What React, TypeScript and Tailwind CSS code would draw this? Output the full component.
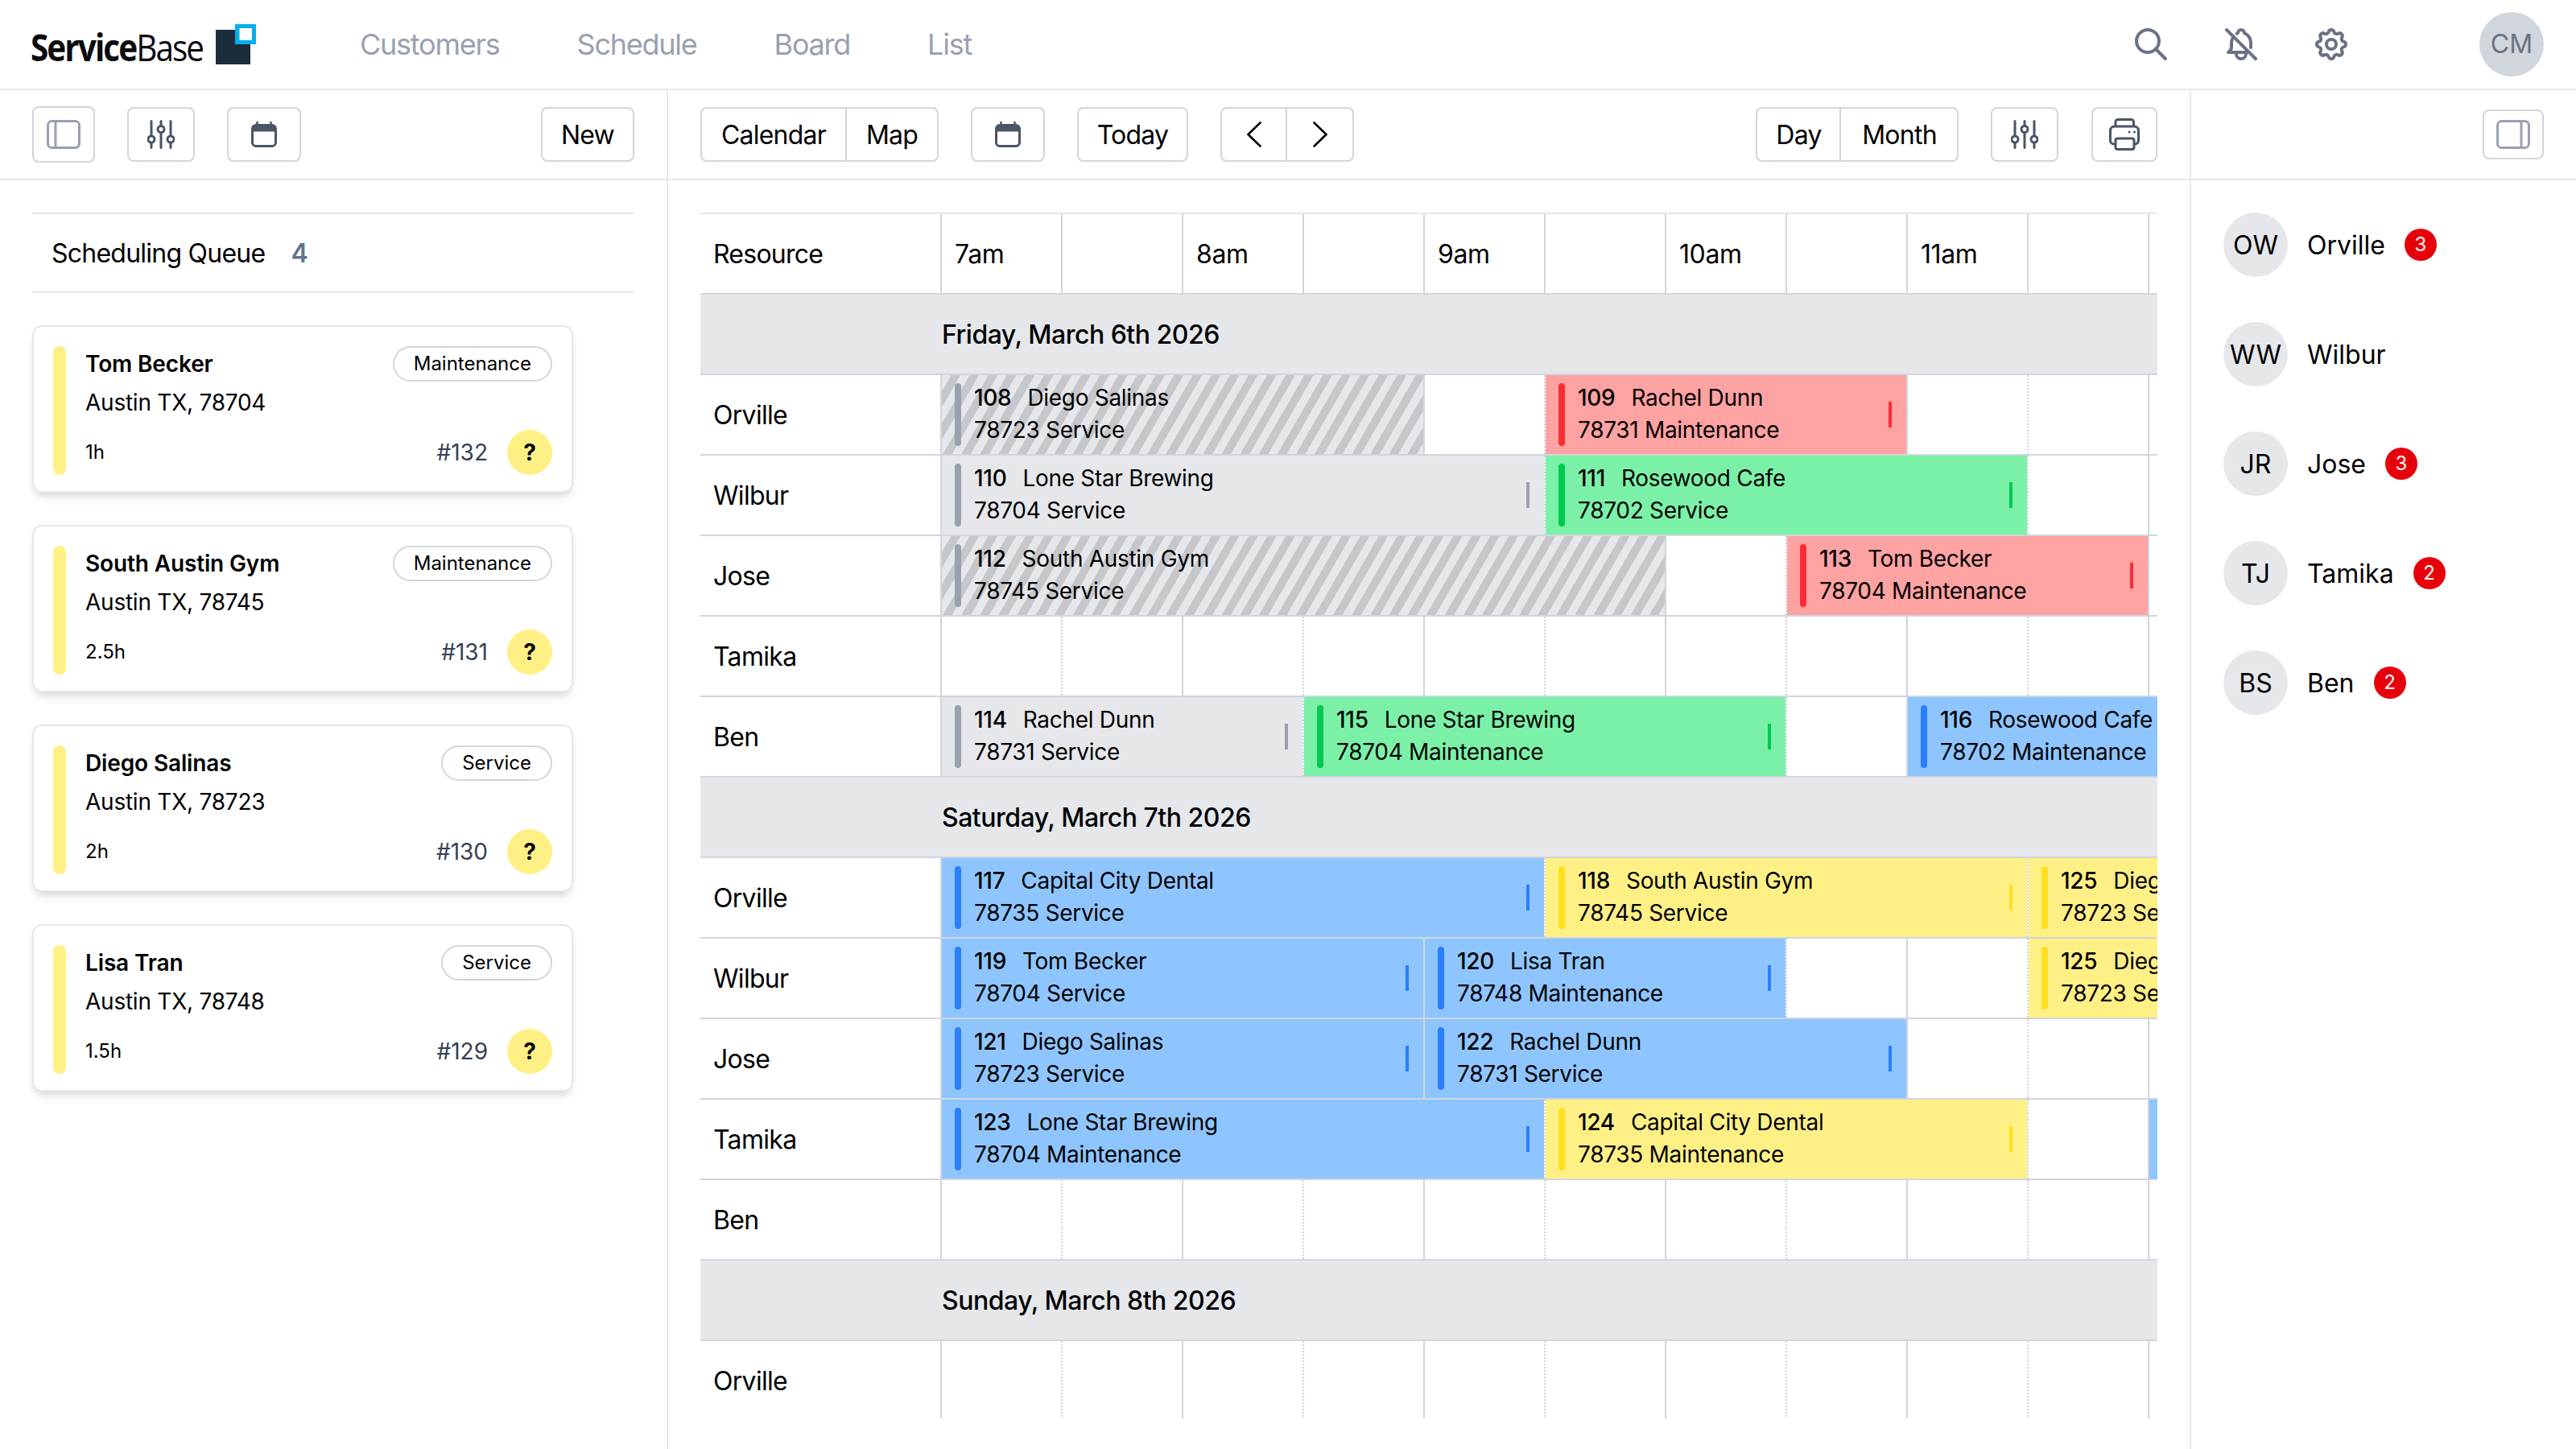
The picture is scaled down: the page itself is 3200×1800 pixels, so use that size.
import React from "react";
import { TbSearch, TbBellOff, TbSettings } from "react-icons/tb";

type Color = "gray" | "stripe" | "red" | "green" | "blue" | "yellow";
type Ev = { id: string; name: string; line2: string; color: Color; start: number; span: number };
type Row = { resource: string; events: Ev[] };

const COLORS: Record<Color, { bg: string; bar: string }> = {
  gray: { bg: "bg-gray-200", bar: "bg-gray-400" },
  stripe: {
    bg: "bg-[repeating-linear-gradient(120deg,#e5e7eb,#e5e7eb_5px,#c5c7cb_5px,#c5c7cb_10px)]",
    bar: "bg-gray-400",
  },
  red: { bg: "bg-red-300", bar: "bg-red-500" },
  green: { bg: "bg-green-300", bar: "bg-green-500" },
  blue: { bg: "bg-blue-300", bar: "bg-blue-500" },
  yellow: { bg: "bg-yellow-200", bar: "bg-yellow-300" },
};

const friday: Row[] = [
  {
    resource: "Orville",
    events: [
      { id: "108", name: "Diego Salinas", line2: "78723 Service", color: "stripe", start: 0, span: 4 },
      { id: "109", name: "Rachel Dunn", line2: "78731 Maintenance", color: "red", start: 5, span: 3 },
    ],
  },
  {
    resource: "Wilbur",
    events: [
      { id: "110", name: "Lone Star Brewing", line2: "78704 Service", color: "gray", start: 0, span: 5 },
      { id: "111", name: "Rosewood Cafe", line2: "78702 Service", color: "green", start: 5, span: 4 },
    ],
  },
  {
    resource: "Jose",
    events: [
      { id: "112", name: "South Austin Gym", line2: "78745 Service", color: "stripe", start: 0, span: 6 },
      { id: "113", name: "Tom Becker", line2: "78704 Maintenance", color: "red", start: 7, span: 3 },
    ],
  },
  { resource: "Tamika", events: [] },
  {
    resource: "Ben",
    events: [
      { id: "114", name: "Rachel Dunn", line2: "78731 Service", color: "gray", start: 0, span: 3 },
      { id: "115", name: "Lone Star Brewing", line2: "78704 Maintenance", color: "green", start: 3, span: 4 },
      { id: "116", name: "Rosewood Cafe", line2: "78702 Maintenance", color: "blue", start: 8, span: 3 },
    ],
  },
];

const saturday: Row[] = [
  {
    resource: "Orville",
    events: [
      { id: "117", name: "Capital City Dental", line2: "78735 Service", color: "blue", start: 0, span: 5 },
      { id: "118", name: "South Austin Gym", line2: "78745 Service", color: "yellow", start: 5, span: 4 },
      { id: "125", name: "Diego Salinas", line2: "78723 Service", color: "yellow", start: 9, span: 3 },
    ],
  },
  {
    resource: "Wilbur",
    events: [
      { id: "119", name: "Tom Becker", line2: "78704 Service", color: "blue", start: 0, span: 4 },
      { id: "120", name: "Lisa Tran", line2: "78748 Maintenance", color: "blue", start: 4, span: 3 },
      { id: "125", name: "Diego Salinas", line2: "78723 Service", color: "yellow", start: 9, span: 3 },
    ],
  },
  {
    resource: "Jose",
    events: [
      { id: "121", name: "Diego Salinas", line2: "78723 Service", color: "blue", start: 0, span: 4 },
      { id: "122", name: "Rachel Dunn", line2: "78731 Service", color: "blue", start: 4, span: 4 },
    ],
  },
  {
    resource: "Tamika",
    events: [
      { id: "123", name: "Lone Star Brewing", line2: "78704 Maintenance", color: "blue", start: 0, span: 5 },
      { id: "124", name: "Capital City Dental", line2: "78735 Maintenance", color: "yellow", start: 5, span: 4 },
      { id: "", name: "", line2: "", color: "blue", start: 10, span: 2 },
    ],
  },
  { resource: "Ben", events: [] },
];

const HALF_HOURS = Array.from({ length: 12 }, (_, i) => i);
const HOUR_LABELS: Record<number, string> = { 0: "7am", 2: "8am", 4: "9am", 6: "10am", 8: "11am", 10: "12pm" };

const queue = [
  { name: "Tom Becker", city: "Austin TX, 78704", tag: "Maintenance", dur: "1h", num: "#132" },
  { name: "South Austin Gym", city: "Austin TX, 78745", tag: "Maintenance", dur: "2.5h", num: "#131" },
  { name: "Diego Salinas", city: "Austin TX, 78723", tag: "Service", dur: "2h", num: "#130" },
  { name: "Lisa Tran", city: "Austin TX, 78748", tag: "Service", dur: "1.5h", num: "#129" },
];

const people = [
  { init: "OW", name: "Orville", count: 3 },
  { init: "WW", name: "Wilbur", count: 0 },
  { init: "JR", name: "Jose", count: 3 },
  { init: "TJ", name: "Tamika", count: 2 },
  { init: "BS", name: "Ben", count: 2 },
];

function SlidersIcon() {
  return (
    <svg viewBox="0 0 34 36" className="w-[17px] h-[18px] text-gray-600" fill="none" stroke="currentColor" strokeWidth="3" strokeLinecap="round">
      <path d="M5 1.5v33M17 1.5v33M29 1.5v33" />
      <circle cx="5" cy="24" r="4" fill="#fff" />
      <circle cx="17" cy="11.5" r="4" fill="#fff" />
      <circle cx="29" cy="24" r="4" fill="#fff" />
    </svg>
  );
}

function CalendarIcon() {
  return (
    <svg viewBox="0 0 32 32" className="w-4 h-4 text-gray-600" fill="none" stroke="currentColor" strokeWidth="3">
      <rect x="1.5" y="4.5" width="29" height="26" rx="4.5" />
      <path d="M1.5 12V9a4.5 4.5 0 0 1 4.5-4.5h20a4.5 4.5 0 0 1 4.5 4.5v3z" fill="currentColor" strokeWidth="1" />
      <path d="M7.5 0.5v5M24.5 0.5v5" strokeWidth="2.5" strokeLinecap="round" />
    </svg>
  );
}

function PrinterIcon() {
  return (
    <svg viewBox="0 0 38 40" className="w-[19px] h-5 text-gray-600" fill="none" stroke="currentColor" strokeWidth="3" strokeLinejoin="round">
      <path d="M8 10V4.5a3 3 0 0 1 3-3h16.5a3 3 0 0 1 3 3V10" />
      <path d="M8 32H6a4.5 4.5 0 0 1-4.5-4.5V15A5 5 0 0 1 6.5 10h25a5 5 0 0 1 5 5v12.5a4.5 4.5 0 0 1-4.5 4.5h-1.5" />
      <rect x="8" y="25" width="23" height="13.5" rx="2.5" fill="#fff" />
      <circle cx="25" cy="17" r="1.5" fill="currentColor" stroke="none" />
      <circle cx="31.5" cy="17" r="1.5" fill="currentColor" stroke="none" />
    </svg>
  );
}

function PanelIcon({ side }: { side: "left" | "right" }) {
  const x = side === "left" ? 11 : 31;
  return (
    <svg viewBox="0 0 42 36" className="w-[21px] h-[18px] text-gray-400" fill="none" stroke="currentColor" strokeWidth="3">
      <rect x="1.5" y="1.5" width="39" height="33" rx="5" />
      <path d={`M${x} 1.5v33`} />
    </svg>
  );
}

function Chevron({ dir }: { dir: "left" | "right" }) {
  return (
    <svg viewBox="0 0 18 32" className="w-[9px] h-4 text-black" fill="none" stroke="currentColor" strokeWidth="2.6" strokeLinecap="round" strokeLinejoin="round">
      <path d={dir === "left" ? "M16.5 1.5L1.5 16l15 14.5" : "M1.5 1.5L16.5 16l-15 14.5"} />
    </svg>
  );
}

function Logo() {
  return (
    <div className="flex items-center">
      <div className="w-[114px] whitespace-nowrap font-['Open_Sans',sans-serif] text-[23px] leading-none tracking-[-1.1px] text-[#0b0b0f] mt-[3px] -ml-px origin-left scale-x-[0.88]">
        <span className="font-bold">Service</span>
        <span>Base</span>
      </div>
      <svg viewBox="0 0 50 50" className="w-[25px] h-[25px] ml-px">
        <rect x="0" y="7" width="43" height="43" fill="#1b2d3d" />
        <rect x="24" y="0" width="26" height="25" fill="#00b0f0" />
        <rect x="29.5" y="5" width="15.5" height="15" fill="#fff" />
      </svg>
    </div>
  );
}

function EventBlock({ ev }: { ev: Ev }) {
  const c = COLORS[ev.color];
  return (
    <div
      className={`${c.bg} ml-px row-start-1 flex items-center pl-2 pr-[9px] min-w-0 overflow-hidden`}
      style={{ gridColumn: `${ev.start + 2} / span ${ev.span}` }}
    >
      <div className={`${c.bar} w-1 h-[39px] rounded-full shrink-0`} />
      <div className="ml-2 -mt-px text-sm leading-5 tracking-[-0.15px] whitespace-nowrap text-black">
        <div>
          <span className="font-medium">{ev.id}</span>
          <span className="ml-2.5">{ev.name}</span>
        </div>
        <div>{ev.line2}</div>
      </div>
      {ev.color !== "stripe" && <div className={`${c.bar} w-0.5 h-4 ml-auto shrink-0`} />}
    </div>
  );
}

function ResourceRow({ row }: { row: Row }) {
  return (
    <div className="grid grid-cols-[149px_repeat(12,75px)] grid-rows-[49px] w-[1049px] border-b border-gray-300">
      <div className="col-start-1 row-start-1 flex items-center pl-2 pt-px text-base tracking-[-0.35px]">{row.resource}</div>
      {HALF_HOURS.map((i) => (
        <div
          key={i}
          className={`row-start-1 border-l border-gray-300 ${i % 2 === 0 ? "border-solid" : "border-dotted"}`}
          style={{ gridColumn: `${i + 2}` }}
        />
      ))}
      {row.events.map((ev) => (
        <EventBlock key={`${ev.id}-${ev.start}`} ev={ev} />
      ))}
    </div>
  );
}

function DayBand({ label }: { label: string }) {
  return (
    <div className="h-[50px] bg-gray-200 border-b border-gray-300 flex items-center pl-[150px] pt-px text-base font-medium tracking-[-0.25px]">
      {label}
    </div>
  );
}

function HeaderRow() {
  return (
    <div className="grid grid-cols-[149px_repeat(12,75px)] grid-rows-[49px] w-[1049px] border-b border-gray-300">
      <div className="flex items-center pl-2 pt-px text-base tracking-[-0.38px]">Resource</div>
      {HALF_HOURS.map((i) => (
        <div key={i} className="border-l border-gray-300 flex items-center pl-2 pt-px text-base tracking-[-0.2px]">
          {HOUR_LABELS[i] ?? ""}
        </div>
      ))}
    </div>
  );
}

const btn = "flex items-center justify-center border border-gray-300 rounded bg-white";
const label = "text-base tracking-[-0.38px] pt-px";

export default function App() {
  return (
    <div className="[zoom:2] w-[1600px] h-[900px] overflow-hidden bg-white text-black font-['Inter',sans-serif] flex flex-col">
      <header className="h-14 shrink-0 border-b border-gray-200 flex items-center pl-5 pr-5">
        <Logo />
        <nav className="ml-[64.5px] flex gap-12 text-lg tracking-[-0.62px] text-gray-400">
          <span>Customers</span>
          <span>Schedule</span>
          <span>Board</span>
          <span>List</span>
        </nav>
        <div className="ml-auto flex items-center gap-8 text-gray-500">
          <TbSearch size={24} />
          <TbBellOff size={24} />
          <TbSettings size={24} />
          <div className="ml-12 w-10 h-10 rounded-full bg-gray-300 flex items-center justify-center text-base">CM</div>
        </div>
      </header>

      <div className="flex flex-1 min-h-0">
        <aside className="w-[415px] shrink-0 border-r border-gray-200 flex flex-col">
          <div className="h-14 shrink-0 border-b border-gray-200 flex items-center px-5 gap-5">
            <button className={`${btn} w-[39px] h-[35px]`}><PanelIcon side="left" /></button>
            <button className={`${btn} w-[42px] h-[34px]`}><SlidersIcon /></button>
            <button className={`${btn} w-[46px] h-[34px]`}><CalendarIcon /></button>
            <button className={`${btn} ${label} ml-auto w-[58px] h-[34px]`}>New</button>
          </div>
          <div className="px-5 pt-5 flex flex-col">
            <div className={`h-[50px] border-t border-b border-gray-200 flex items-center px-3 ${label}`}>
              <span>Scheduling Queue</span>
              <span className="ml-4 font-semibold text-slate-500">4</span>
            </div>
            <div className="mt-5 flex flex-col gap-5 w-[336px]">
              {queue.map((q) => (
                <div key={q.num} className="h-[104px] border border-gray-200 rounded-md shadow-md flex gap-3 px-3 pt-3">
                  <div className="w-2 h-20 rounded-full bg-yellow-200 shrink-0" />
                  <div className="flex-1 h-20 flex flex-col">
                    <div className="flex items-center justify-between">
                      <span className="text-sm font-semibold tracking-[-0.07px]">{q.name}</span>
                      <span className="text-xs border border-gray-300 rounded-full px-3 py-0.5">{q.tag}</span>
                    </div>
                    <div className="text-sm tracking-[-0.12px] mt-[3px]">{q.city}</div>
                    <div className="mt-auto flex items-center">
                      <span className="text-xs">{q.dur}</span>
                      <span className="ml-auto text-sm text-gray-700">{q.num}</span>
                      <span className="ml-3 w-7 h-7 rounded-full bg-yellow-200 flex items-center justify-center text-sm font-bold">?</span>
                    </div>
                  </div>
                </div>
              ))}
            </div>
          </div>
        </aside>

        <main className="w-[945px] shrink-0 flex flex-col">
          <div className="h-14 shrink-0 border-b border-gray-200 flex items-center px-5 gap-5">
            <div className={`flex h-[34px] border border-gray-300 rounded ${label}`}>
              <span className="w-[90px] -mt-px flex items-center justify-center border-r border-gray-300 pt-px">Calendar</span>
              <span className="w-[56px] flex items-center justify-center">Map</span>
            </div>
            <button className={`${btn} w-[46px] h-[34px]`}><CalendarIcon /></button>
            <button className={`${btn} ${label} w-[69px] h-[34px]`}>Today</button>
            <div className="flex h-[34px] border border-gray-300 rounded">
              <span className="w-[40.5px] flex items-center justify-center border-r border-gray-300"><Chevron dir="left" /></span>
              <span className="w-[40.5px] flex items-center justify-center"><Chevron dir="right" /></span>
            </div>
            <div className="ml-auto flex items-center gap-5">
              <div className={`flex h-[34px] border border-gray-300 rounded ${label}`}>
                <span className="w-[52px] pl-px -mt-px flex items-center justify-center border-r border-gray-300 pt-px">Day</span>
                <span className="w-[72px] pl-px flex items-center justify-center">Month</span>
              </div>
              <button className={`${btn} w-[42px] h-[34px] mr-[0.75px]`}><SlidersIcon /></button>
              <button className={`${btn} w-[41px] h-[34px]`}><PrinterIcon /></button>
            </div>
          </div>
          <div className="flex-1 min-h-0 px-5 pt-5 pb-[19px]">
            <div className="h-full overflow-hidden border-t border-gray-200">
              <HeaderRow />
              <DayBand label="Friday, March 6th 2026" />
              {friday.map((r) => <ResourceRow key={r.resource} row={r} />)}
              <DayBand label="Saturday, March 7th 2026" />
              {saturday.map((r) => <ResourceRow key={r.resource} row={r} />)}
              <DayBand label="Sunday, March 8th 2026" />
              <ResourceRow row={{ resource: "Orville", events: [] }} />
            </div>
          </div>
        </main>

        <aside className="flex-1 border-l border-gray-200 flex flex-col">
          <div className="h-14 shrink-0 border-b border-gray-200 flex items-center justify-end px-5">
            <button className={`${btn} w-[38px] h-[31px]`}><PanelIcon side="right" /></button>
          </div>
          <div className="px-5 pt-5 flex flex-col gap-7">
            {people.map((p) => (
              <div key={p.init} className="flex items-center gap-3 text-base">
                <div className="w-10 h-10 pt-px rounded-full bg-gray-200 flex items-center justify-center">{p.init}</div>
                <span className="pt-px">{p.name}</span>
                {p.count > 0 && (
                  <span className="w-5 h-5 rounded-full bg-red-600 text-white text-xs flex items-center justify-center">{p.count}</span>
                )}
              </div>
            ))}
          </div>
        </aside>
      </div>
    </div>
  );
}
